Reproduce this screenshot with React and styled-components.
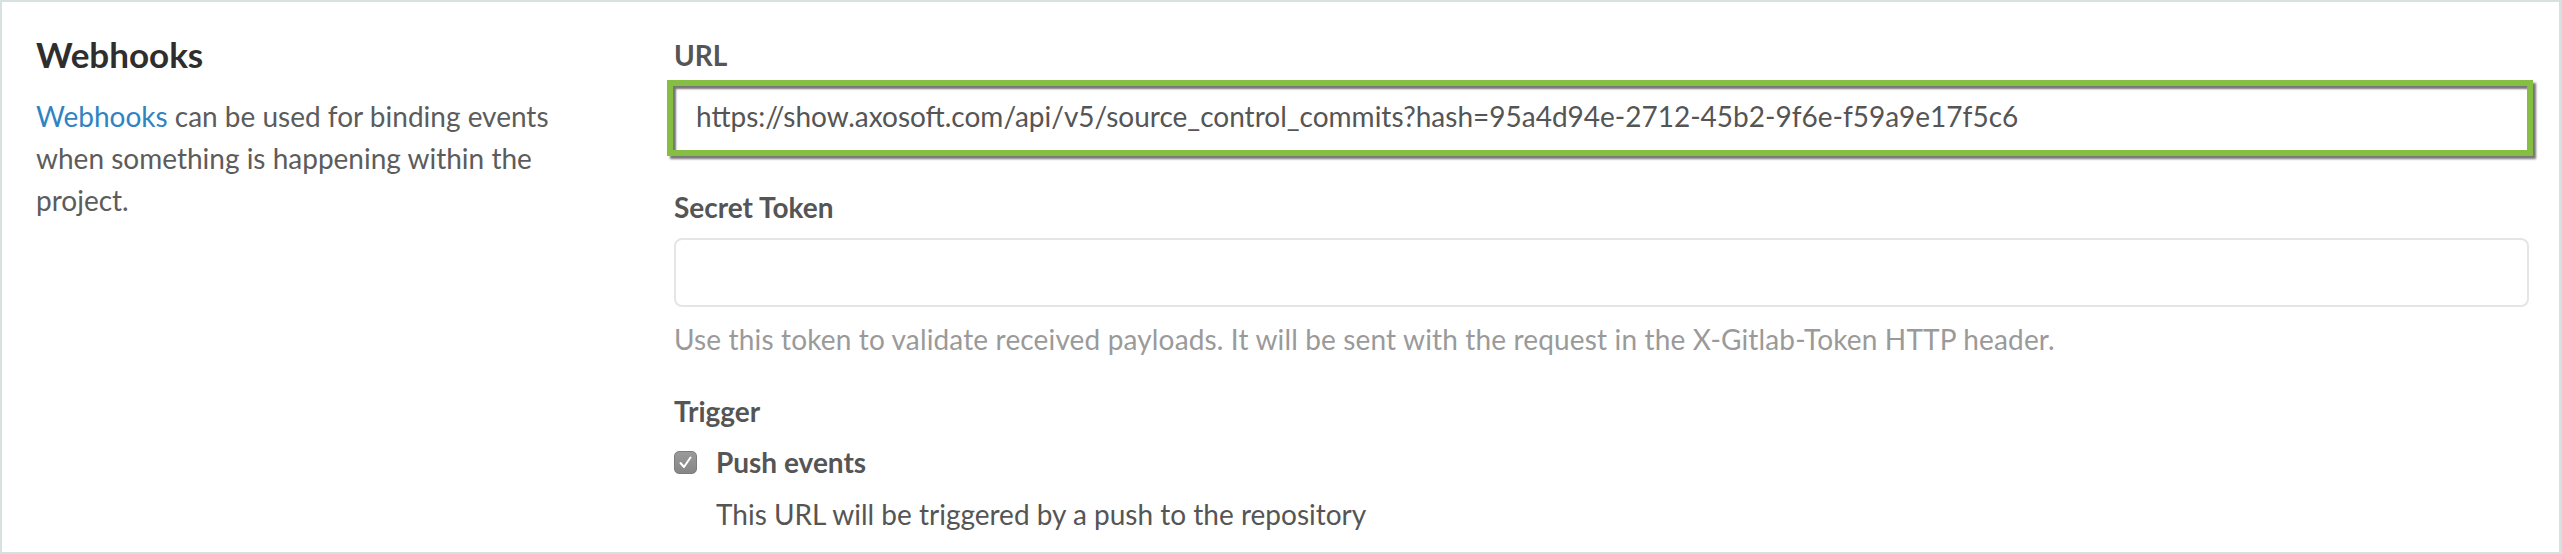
import React from 'react'
import styled, { createGlobalStyle } from 'styled-components'

const GlobalStyle = createGlobalStyle`
  html, body {
    margin: 0;
    background: #fff;
  }
  body {
    font-family: Lato, "Open Sans", sans-serif;
    -webkit-font-smoothing: antialiased;
  }
`

const Panel = styled.section`
  box-sizing: border-box;
  width: 2562px;
  height: 554px;
  display: flex;
  border: 2px solid #d6e1e2;
  border-right-width: 3px;
  background: #fff;
`

const Sidebar = styled.div`
  box-sizing: border-box;
  flex: 0 0 672px;
  padding: 31px 0 0 34px;
`

const Title = styled.h4`
  margin: 0;
  font-size: 35px;
  line-height: 42px;
  font-weight: 700;
  color: #2e2e2e;
`

const Intro = styled.p`
  margin: 20px 0 0;
  max-width: 560px;
  font-size: 28px;
  line-height: 42px;
  color: #5c5c5c;
`

const Link = styled.a`
  color: #2f84c2;
  text-decoration: none;
`

const Form = styled.div`
  flex: 1;
  display: flex;
  flex-direction: column;
  padding: 33px 30px 0 0;
`

const Field = styled.div`
  display: flex;
  flex-direction: column;
  margin-bottom: ${p => p.$gap || 0}px;
`

const Label = styled.label`
  font-size: 28px;
  line-height: 40px;
  font-weight: 700;
  color: #555;
  margin-bottom: ${p => p.$gap || 5}px;
`

const Input = styled.input`
  box-sizing: border-box;
  height: 69px;
  padding: 0 22px;
  font: inherit;
  font-size: 28px;
  color: #555;
  background: #fff;
  border: 2px solid #e5e5e5;
  border-radius: 8px;
  outline: none;
`

/* green annotation box drawn round the url field, with its drop shadow */
const MarkedInput = styled(Input)`
  height: 76px;
  margin: 0 -4px 0 -7px;
  padding: 0 0 4px 23px;
  border: 6px solid #86bd43;
  border-radius: 0;
  box-shadow: 3px 3px 2px rgba(60, 60, 60, 0.7),
    inset 3px 3px 2px rgba(60, 60, 60, 0.7);
`

const Help = styled.p`
  margin: 12px 0 0;
  font-size: 28px;
  line-height: 40px;
  letter-spacing: 0.15px;
  color: #9a9a9a;
`

const CheckRow = styled.div`
  display: flex;
  align-items: center;
  gap: 19px;
  height: 40px;
`

const Box = styled.span`
  box-sizing: border-box;
  width: 23px;
  height: 23px;
  display: flex;
  align-items: center;
  justify-content: center;
  border-radius: 5px;
  border: 1px solid #7d7d7d;
  background: linear-gradient(#9a9a9a, #868686);
`

const CheckLabel = styled.span`
  font-size: 28px;
  font-weight: 700;
  color: #555;
`

const CheckHelp = styled.p`
  margin: 12px 0 0 42px;
  font-size: 28px;
  line-height: 40px;
  color: #555;
`

function Checkbox() {
  return (
    <Box>
      <svg width="15" height="15" viewBox="0 0 15 15">
        <path d="M2.5 8 L6 12 L12.5 2.5" fill="none" stroke="#fff" strokeWidth="2" strokeLinecap="round" strokeLinejoin="round" />
      </svg>
    </Box>
  )
}

export default function App() {
  return (
    <>
      <GlobalStyle />
      <Panel>
        <Sidebar>
          <Title>Webhooks</Title>
          <Intro>
            <Link href="#">Webhooks</Link> can be used for binding events when something is happening within the project.
          </Intro>
        </Sidebar>
        <Form>
          <Field $gap={31}>
            <Label>URL</Label>
            <MarkedInput
              readOnly
              value="https://show.axosoft.com/api/v5/source_control_commits?hash=95a4d94e-2712-45b2-9f6e-f59a9e17f5c6"
            />
          </Field>
          <Field $gap={32}>
            <Label $gap={11}>Secret Token</Label>
            <Input />
            <Help>Use this token to validate received payloads. It will be sent with the request in the X-Gitlab-Token HTTP header.</Help>
          </Field>
          <Field>
            <Label $gap={11}>Trigger</Label>
            <CheckRow>
              <Checkbox />
              <CheckLabel>Push events</CheckLabel>
            </CheckRow>
            <CheckHelp>This URL will be triggered by a push to the repository</CheckHelp>
          </Field>
        </Form>
      </Panel>
    </>
  )
}
